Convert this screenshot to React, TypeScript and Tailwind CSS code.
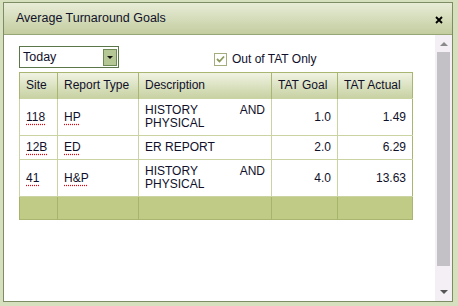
import React from "react";

const rows = [
  { site: "118", type: "HP", desc: "HISTORY AND PHYSICAL", goal: "1.0", actual: "1.49" },
  { site: "12B", type: "ED", desc: "ER REPORT", goal: "2.0", actual: "6.29" },
  { site: "41", type: "H&P", desc: "HISTORY AND PHYSICAL", goal: "4.0", actual: "13.63" },
];

const headers = ["Site", "Report Type", "Description", "TAT Goal", "TAT Actual"];
const widths = ["w-[38px]", "w-[81px]", "w-[133px]", "w-[66px]", "w-[75px]"];

function Flagged({ children }: { children: React.ReactNode }) {
  // spell-check style squiggle under codes
  return (
    <span className="underline decoration-dotted decoration-red-600 underline-offset-[3px]">
      {children}
    </span>
  );
}

export default function App() {
  return (
    <div
      className="w-[458px] h-[306px] bg-[#d6e0bf] pt-[2px] pl-[3px] text-[12px] leading-[13px] text-[#10102a]"
      style={{ fontFamily: '"Liberation Sans", Arial, sans-serif' }}
    >
      <div className="w-[450px] h-[300px] border border-[#7d8c62] flex flex-col">
        {/* title bar */}
        <div className="h-[32px] shrink-0 flex items-center justify-between pl-[12px] pr-[9px] border-b border-[#97a677] bg-gradient-to-b from-[#e8ecd7] to-[#c3cd9f]">
          <span className="text-[12.5px]">Average Turnaround Goals</span>
          <svg width="8" height="8" viewBox="0 0 8 8" className="mt-[2px]">
            <path d="M1 1 L7 7 M7 1 L1 7" stroke="#000" strokeWidth="1.9" />
          </svg>
        </div>

        <div className="flex-1 flex min-h-0">
          {/* content */}
          <div className="flex-1 bg-white pl-[15px] pt-[11px]">
            <div className="flex items-center">
              <div className="w-[100px] h-[22px] border border-[#5b7649] flex items-center justify-between pl-[3px] pr-[1px]">
                <span className="text-[12.5px] text-[#10102a]">Today</span>
                <div className="w-[14px] h-[17px] bg-[#b5c794] border border-[#6d8954] flex items-center justify-center">
                  <svg width="6" height="3" viewBox="0 0 6 3">
                    <path d="M0 0 L6 0 L3 3 Z" fill="#111" />
                  </svg>
                </div>
              </div>
              <div className="ml-[95px] mt-[4px] flex items-center gap-[5px]">
                <div className="w-[13px] h-[13px] border border-[#a5ad7e] bg-white flex items-center justify-center">
                  <svg width="9" height="8" viewBox="0 0 9 8">
                    <path d="M1 4 L3.5 6.5 L8 1.5" stroke="#8a9a5a" strokeWidth="1.8" fill="none" />
                  </svg>
                </div>
                <span>Out of TAT Only</span>
              </div>
            </div>

            <table className="mt-[4px] border-collapse border border-[#a9b672] table-fixed">
              <thead>
                <tr className="h-[26px] bg-gradient-to-b from-[#f0f3e2] to-[#c6d0a0]">
                  {headers.map((h, i) => (
                    <th
                      key={h}
                      className={`${widths[i]} border-l border-[#a9b672] font-normal px-[6px] text-left`}
                    >
                      {h}
                    </th>
                  ))}
                </tr>
              </thead>
              <tbody>
                {rows.map((r) => (
                  <tr key={r.site} className="border-t border-[#c9d4a2]">
                    <td className="border-l border-[#c9d4a2] px-[6px] py-[5px] align-middle">
                      <Flagged>{r.site}</Flagged>
                    </td>
                    <td className="border-l border-[#c9d4a2] px-[6px] py-[5px] align-middle">
                      <Flagged>{r.type}</Flagged>
                    </td>
                    <td className="border-l border-[#c9d4a2] px-[6px] py-[5px] align-middle text-justify">
                      {r.desc}
                    </td>
                    <td className="border-l border-[#c9d4a2] px-[6px] py-[5px] align-middle text-right">
                      {r.goal}
                    </td>
                    <td className="border-l border-[#c9d4a2] px-[6px] py-[5px] align-middle text-right">
                      {r.actual}
                    </td>
                  </tr>
                ))}
                <tr className="h-[23px] bg-[#c0cc86] border-t border-[#c9d4a2]">
                  {headers.map((h) => (
                    <td key={h} className="border-l border-[#a6b46c]" />
                  ))}
                </tr>
              </tbody>
            </table>
          </div>

          {/* scrollbar */}
          <div className="w-[17px] bg-[#f4eff4] flex flex-col items-center">
            <div className="h-[17px] flex items-center justify-center">
              <svg width="8" height="4" viewBox="0 0 8 4">
                <path d="M0 4 L8 4 L4 0 Z" fill="#8a8a8a" />
              </svg>
            </div>
            <div className="w-[13px] h-[214px] bg-[#c4c1c6]" />
            <div className="flex-1 flex items-end justify-center pb-[7px]">
              <svg width="8" height="4" viewBox="0 0 8 4">
                <path d="M0 0 L8 0 L4 4 Z" fill="#555" />
              </svg>
            </div>
          </div>
        </div>
      </div>
    </div>
  );
}
